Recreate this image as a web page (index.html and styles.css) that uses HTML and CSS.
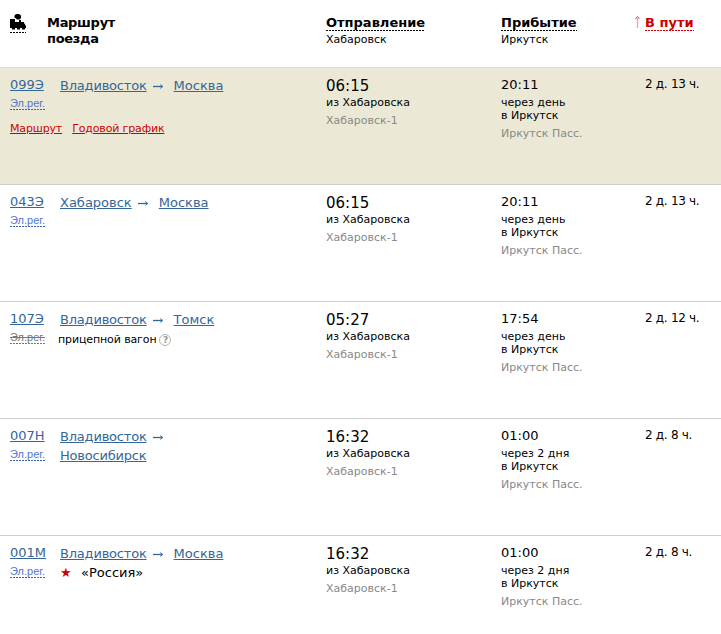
FILE: index.html
```html
<!DOCTYPE html>
<html lang="ru">
<head>
<meta charset="utf-8">
<title>Поезда</title>
<link rel="stylesheet" href="styles.css">
</head>
<body>
<svg class="defs" width="0" height="0" aria-hidden="true">
  <symbol id="arrow" viewBox="0 0 10 5"><path d="M0 2.500h9" stroke="#336699" stroke-width="1.300" fill="none"/><path d="M7 .5 10 2.500 7 4.500" stroke="#336699" stroke-width=".8" fill="none"/></symbol>
</svg>
<div class="table">
  <div class="row head">
    <div class="c-num"><svg class="loco" width="16" height="19" viewBox="0 0 16 19"><path d="M4.500 1.500 6 0h3l2 1.500V4L9.500 5.500H7L5.500 4H4.500z" fill="#000"/><path d="M0 5h5v3h4V6h2v2h3v1l2 3v2H0z" fill="#000"/><path d="M2 14h3v1.500H2zM7 14h3v1.500H7zM12 14h3v1.500h-3z" fill="#000"/><path d="M0 18.500h16" stroke="#000" stroke-dasharray="2 1" fill="none"/></svg></div>
    <div class="c-route h-title h-route">Маршрут<br>поезда</div>
    <div class="c-dep"><span class="h-title dotted">Отправление</span><div class="h-sub">Хабаровск</div></div>
    <div class="c-arr"><span class="h-title dotted">Прибытие</span><div class="h-sub">Иркутск</div></div>
    <div class="c-dur h-dur"><svg class="sort" width="5" height="12" viewBox="0 0 5 12"><path d="M2.500 2v10" stroke="#eda6c4" stroke-width="1.500" fill="none"/><path d="M.5 3 2.500 .5 4.500 3" stroke="#d9486f" stroke-width="1" fill="none"/></svg><span class="h-title dotted red">В пути</span></div>
  </div>

  <div class="row hl">
    <div class="c-num"><a class="num">099Э</a><a class="er">Эл.рег.</a></div>
    <div class="c-route"><div class="route"><a class="tight">Владивосток</a><svg class="arrow"><use href="#arrow"/></svg><a>Москва</a></div></div>
    <div class="c-dep"><div class="time">06:15</div><div class="from">из Хабаровска</div><div class="st">Хабаровск-1</div></div>
    <div class="c-arr"><div class="atime">20:11</div><div class="when">через день<br>в Иркутск</div><div class="st">Иркутск Пасс.</div></div>
    <div class="c-dur dur">2 д. 13 ч.</div>
    <div class="extra"><a>Маршрут</a><a>Годовой график</a></div>
  </div>

  <div class="row">
    <div class="c-num"><a class="num">043Э</a><a class="er">Эл.рег.</a></div>
    <div class="c-route"><div class="route"><a>Хабаровск</a><svg class="arrow"><use href="#arrow"/></svg><a>Москва</a></div></div>
    <div class="c-dep"><div class="time">06:15</div><div class="from">из Хабаровска</div><div class="st">Хабаровск-1</div></div>
    <div class="c-arr"><div class="atime">20:11</div><div class="when">через день<br>в Иркутск</div><div class="st">Иркутск Пасс.</div></div>
    <div class="c-dur dur">2 д. 13 ч.</div>
  </div>

  <div class="row">
    <div class="c-num"><a class="num">107Э</a><a class="er off">Эл.рег.</a></div>
    <div class="c-route"><div class="route"><a class="tight">Владивосток</a><svg class="arrow"><use href="#arrow"/></svg><a>Томск</a></div><div class="note shift">прицепной вагон <span class="q">?</span></div></div>
    <div class="c-dep"><div class="time">05:27</div><div class="from">из Хабаровска</div><div class="st">Хабаровск-1</div></div>
    <div class="c-arr"><div class="atime">17:54</div><div class="when">через день<br>в Иркутск</div><div class="st">Иркутск Пасс.</div></div>
    <div class="c-dur dur">2 д. 12 ч.</div>
  </div>

  <div class="row">
    <div class="c-num"><a class="num">007Н</a><a class="er">Эл.рег.</a></div>
    <div class="c-route"><div class="route"><a class="tight">Владивосток</a><svg class="arrow"><use href="#arrow"/></svg><br><a class="tight">Новосибирск</a></div></div>
    <div class="c-dep"><div class="time">16:32</div><div class="from">из Хабаровска</div><div class="st">Хабаровск-1</div></div>
    <div class="c-arr"><div class="atime">01:00</div><div class="when">через 2 дня<br>в Иркутск</div><div class="st">Иркутск Пасс.</div></div>
    <div class="c-dur dur">2 д. 8 ч.</div>
  </div>

  <div class="row">
    <div class="c-num"><a class="num">001М</a><a class="er">Эл.рег.</a></div>
    <div class="c-route"><div class="route"><a class="tight">Владивосток</a><svg class="arrow"><use href="#arrow"/></svg><a>Москва</a></div><div class="note big"><span class="star">★</span>«Россия»</div></div>
    <div class="c-dep"><div class="time">16:32</div><div class="from">из Хабаровска</div><div class="st">Хабаровск-1</div></div>
    <div class="c-arr"><div class="atime">01:00</div><div class="when">через 2 дня<br>в Иркутск</div><div class="st">Иркутск Пасс.</div></div>
    <div class="c-dur dur">2 д. 8 ч.</div>
  </div>
</div>
</body>
</html>
```
FILE: styles.css
```css
* { box-sizing: border-box; }
html, body { margin: 0; padding: 0; background: #fff; overflow: hidden; }
body { font-family: "DejaVu Sans", Verdana, sans-serif; font-size: 11px; color: #000; }
.defs { display: block; height: 0; }
.table { width: 721px; }
.row {
  display: grid;
  grid-template-columns: 50px 266px 175px 144px 76px;
  padding-left: 10px;
  height: 117px;
  border-top: 1px solid #ccc;
  padding-top: 9px;
  position: relative;
  align-content: start;
}
.row.head {
  height: 67px;
  border-top: 0;
  padding-top: 15px;
  grid-template-columns: 37px 279px 175px 133px 87px;
}
.row.hl { background: #ebe9d6; border-top-color: #ddd; }
a { color: #336699; text-decoration: underline; }
.h-title { font-weight: bold; font-size: 13px; line-height: 16px; }
.h-route { letter-spacing: -0.3px; }
.dotted {
  display: inline-block;
  background: linear-gradient(90deg, #000 2px, transparent 2px) 0 100% / 3px 1px repeat-x;
}
.dotted.red {
  color: #c00;
  background-image: linear-gradient(90deg, #c00 2px, transparent 2px);
}
.h-sub { font-size: 11px; line-height: 14px; margin-top: 2px; }
.loco { display: block; margin-top: -1px; }
.h-dur { display: flex; align-items: flex-start; }
.sort { margin: 1px 5px 0 1px; flex: none; }
.num { display: block; font-size: 13px; line-height: 16px; }
.er {
  display: inline-block;
  font-family: "Liberation Sans", Arial, sans-serif;
  font-size: 11px;
  line-height: 13px;
  color: #5577cc;
  text-decoration: none;
  margin-top: 4px;
  background: linear-gradient(90deg, #3366aa 2px, transparent 2px) 0 100% / 3px 1px repeat-x;
}
.er.off {
  color: #777;
  text-decoration: line-through;
  background-image: linear-gradient(90deg, #777 2px, transparent 2px);
}
.route { font-size: 13px; line-height: 19px; margin-top: -1px; }
.route a.tight { letter-spacing: -0.2px; }
.arrow { width: 10px; height: 5px; margin: 0 11px 0 6px; vertical-align: 1px; }
.note { font-size: 11px; line-height: 14px; margin-top: 3px; display: flex; align-items: center; gap: 3px; letter-spacing: -0.12px; }
.note.shift { margin-left: -2px; margin-top: 4px; }
.note.big { font-size: 13px; letter-spacing: 0; }
.q { display: inline-flex; width: 12px; height: 12px; border: 1px solid #b5b5a5; border-radius: 50%; color: #999; font-size: 9px; font-weight: bold; line-height: 10px; align-items: center; justify-content: center; }
.star { color: #c00; font-size: 13px; width: 18px; }
.time { font-size: 15px; line-height: 18px; }
.from { line-height: 14px; margin-top: 1px; }
.st { color: #888; line-height: 14px; margin-top: 4px; }
.atime { font-size: 13px; line-height: 18px; margin-top: -1px; }
.when { line-height: 13px; margin-top: 2px; }
.c-arr .st { margin-top: 5px; }
.dur { font-size: 12px; line-height: 14px; letter-spacing: -0.3px; }
.extra { position: absolute; left: 10px; top: 54px; display: flex; gap: 10px; line-height: 14px; letter-spacing: -0.15px; }
.extra a { color: #c00; }
```
